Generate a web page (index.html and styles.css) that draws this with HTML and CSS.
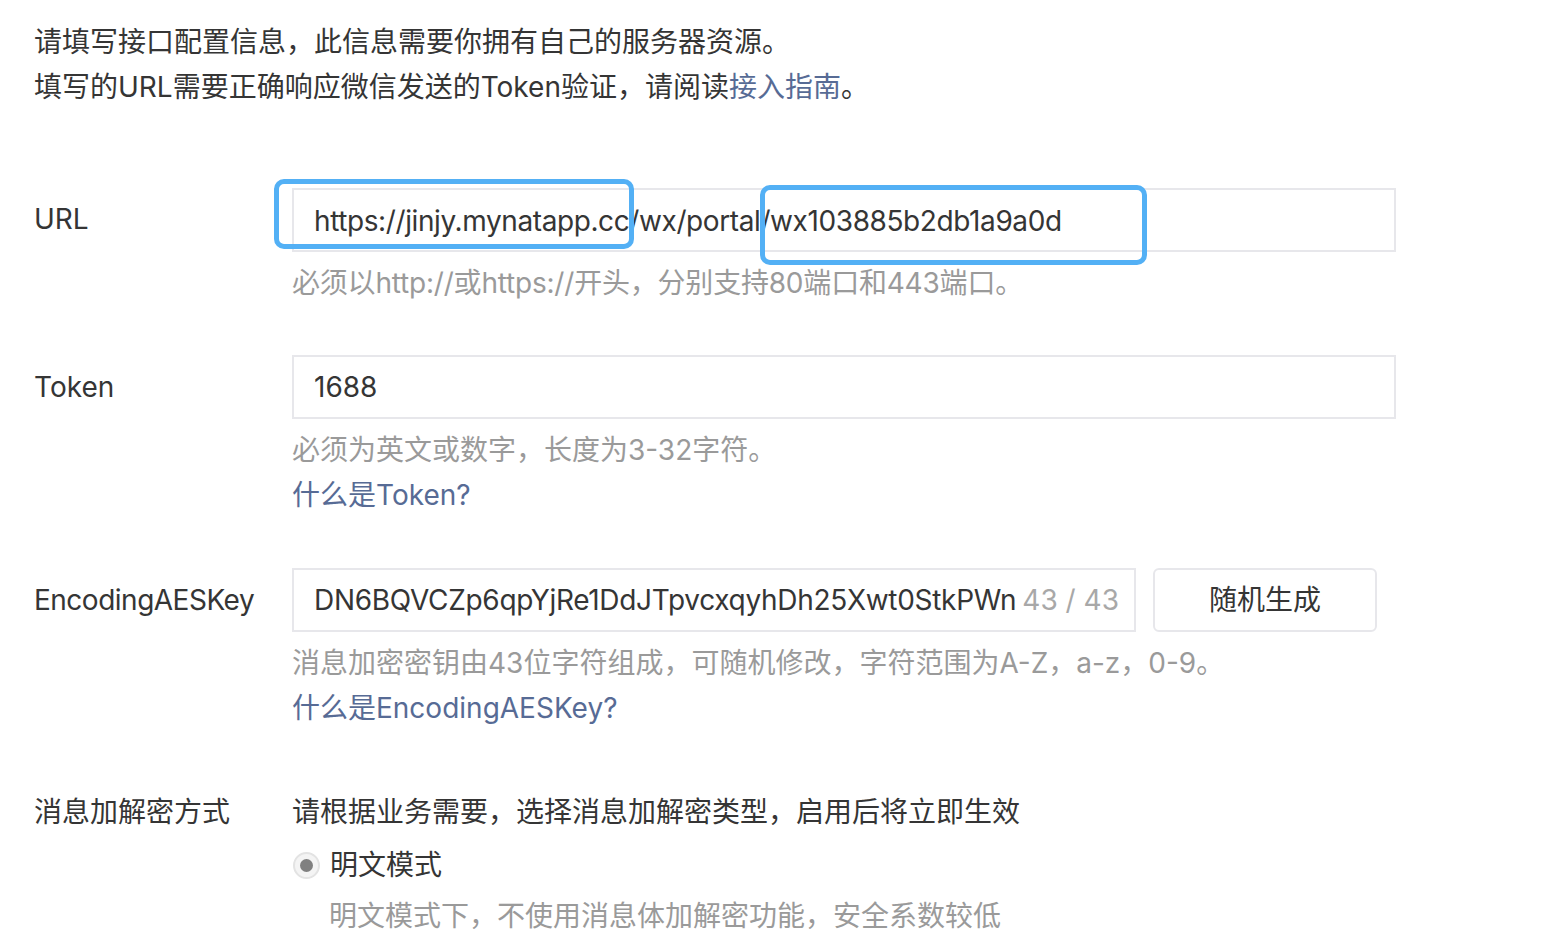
FILE: index.html
```html
<!DOCTYPE html>
<html lang="zh-CN">
<head>
<meta charset="utf-8">
<title>接口配置信息</title>
<link rel="stylesheet" href="styles.css">
</head>
<body>
<div class="page">
  <div class="intro">
    <p>请填写接口配置信息，此信息需要你拥有自己的服务器资源。</p>
    <p>填写的URL需要正确响应微信发送的Token验证，请阅读<a class="link" href="#">接入指南</a>。</p>
  </div>

  <div class="form">
    <div class="row">
      <div class="label">URL</div>
      <div class="field">
        <div class="input-wrap">
          <div class="input wide url">https://jinjy.mynatapp.cc/wx/portal/wx103885b2db1a9a0d</div>
          <span class="mark mark-a"></span>
          <span class="mark mark-b"></span>
        </div>
        <div class="help tight">必须以http://或https://开头，分别支持80端口和443端口。</div>
      </div>
    </div>

    <div class="row">
      <div class="label">Token</div>
      <div class="field">
        <div class="input wide">1688</div>
        <div class="help">必须为英文或数字，长度为3-32字符。</div>
        <a class="link block" href="#">什么是Token?</a>
      </div>
    </div>

    <div class="row">
      <div class="label tight">EncodingAESKey</div>
      <div class="field">
        <div class="key-line">
          <div class="input key"><span class="key-text">DN6BQVCZp6qpYjRe1DdJTpvcxqyhDh25Xwt0StkPWn</span><span class="counter">43 / 43</span></div>
          <button class="btn" type="button">随机生成</button>
        </div>
        <div class="help">消息加密密钥由43位字符组成，可随机修改，字符范围为A-Z，a-z，0-9。</div>
        <a class="link block" href="#">什么是EncodingAESKey?</a>
      </div>
    </div>

    <div class="row">
      <div class="label">消息加解密方式</div>
      <div class="field text-field">
        <div class="plain">请根据业务需要，选择消息加解密类型，启用后将立即生效</div>
        <label class="radio-line">
          <span class="radio"><span class="radio-dot"></span></span>
          <span>明文模式</span>
        </label>
        <div class="help indent">明文模式下，不使用消息体加解密功能，安全系数较低</div>
      </div>
    </div>
  </div>
</div>
</body>
</html>
```

FILE: styles.css
```css
* { box-sizing: border-box; }

html, body {
  margin: 0;
  padding: 0;
  background: #ffffff;
}

body {
  font-family: Inter, "Noto Sans CJK SC", "Noto Sans", sans-serif;
  font-size: 28px;
  line-height: 44.8px;
  color: #353535;
}

.page {
  padding: 20px 0 0 34px;
}

.intro p {
  margin: 0;
}

.link {
  color: #576b95;
  text-decoration: none;
}

.link.block {
  display: block;
}

.form {
  margin-top: 78px;
  display: flex;
  flex-direction: column;
  gap: 50px;
}

.row {
  display: flex;
  align-items: flex-start;
}

.label {
  width: 258px;
  flex: none;
  padding-top: 9.6px;
  white-space: nowrap;
}

.label.tight {
  letter-spacing: -0.5px;
}

.field {
  flex: none;
  display: flex;
  flex-direction: column;
  align-items: flex-start;
}

.text-field {
  padding-top: 9.6px;
}

.input-wrap {
  position: relative;
}

.input {
  height: 64px;
  border: 2px solid #e7e7eb;
  background: #fff;
  padding: 0 20px;
  display: flex;
  align-items: center;
  white-space: nowrap;
  color: #353535;
}

.input.wide {
  width: 1104px;
}

.input.url {
  letter-spacing: -0.4px;
  padding-top: 3px;
}

.key-line {
  display: flex;
  gap: 17px;
}

.input.key {
  width: 844px;
  justify-content: space-between;
  padding-right: 20px;
}

.key-text {
  letter-spacing: -0.3px;
}

.counter {
  color: #a8a8a8;
  margin-left: 6px;
}

.btn {
  width: 224px;
  height: 64px;
  border: 2px solid #e7e7eb;
  border-radius: 6px;
  background: #fff;
  font: inherit;
  color: #353535;
  padding: 0;
}

.help {
  color: #9a9a9a;
  margin-top: 9px;
}

.help.tight {
  letter-spacing: -0.2px;
}

.help.indent {
  margin-top: 6px;
  padding-left: 37px;
}

.plain {
  color: #353535;
}

.radio-line {
  display: flex;
  align-items: center;
  gap: 10px;
  margin-top: 8px;
  color: #353535;
}

.radio {
  width: 27px;
  height: 27px;
  border-radius: 50%;
  border: 2px solid #e3e3e3;
  background: #f4f4f4;
  display: flex;
  align-items: center;
  justify-content: center;
  margin-left: 1px;
}

.radio-dot {
  width: 13px;
  height: 13px;
  border-radius: 50%;
  background: #808080;
}

.mark {
  position: absolute;
  border: 5px solid #53b0f5;
  border-radius: 10px;
  pointer-events: none;
}

.mark-a {
  left: -18px;
  top: -9px;
  width: 360px;
  height: 70px;
}

.mark-b {
  left: 468px;
  top: -3px;
  width: 387px;
  height: 80px;
}
```
